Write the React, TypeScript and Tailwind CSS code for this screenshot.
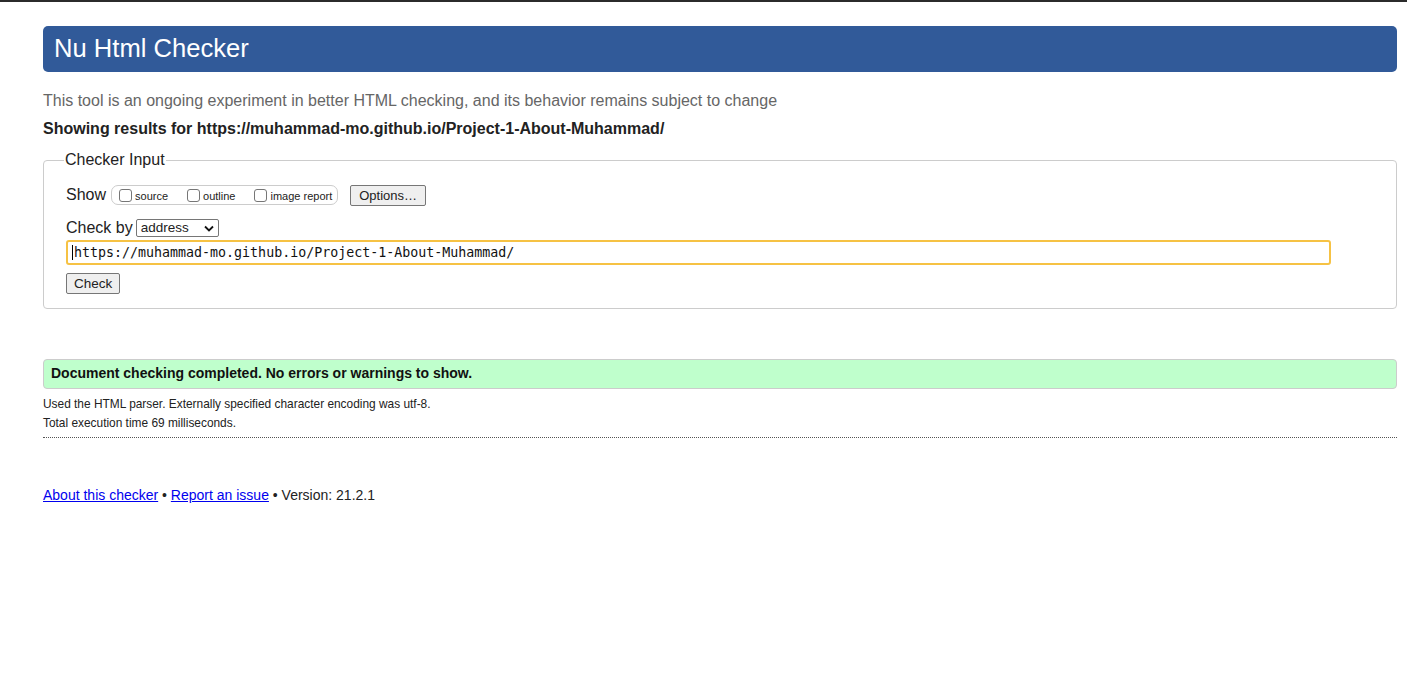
import React from "react";

const sans = "font-['Liberation_Sans',Arial,sans-serif]";

function ShowBox({ label }: { label: string }) {
  return (
    <label className="flex items-center gap-[3px] mr-[19px] last:mr-0">
      <input type="checkbox" className="w-[13px] h-[13px] m-0 appearance-none border border-[#767676] rounded-[3px] bg-white" />
      <span className="text-[11px] leading-none mt-[3px]">{label}</span>
    </label>
  );
}

export default function App() {
  return (
    <div className={`${sans} min-h-screen bg-white text-[#222] border-t-2 border-[#2b2b2b]`}>
      <div className="pl-[43px] pr-[10px] pt-[24px]">
        <h1 className="bg-[#315a99] text-white rounded-[5px] h-[46px] flex items-center pl-[11px] text-[25.6px] leading-none">
          Nu Html Checker
        </h1>
        <p className="text-[#666] text-[16px] mt-[19px] leading-[20px]">
          This tool is an ongoing experiment in better HTML checking, and its behavior remains subject to change
        </p>
        <p className="font-bold text-[16px] mt-[8px] leading-[20px] text-[#222]">
          Showing results for https://muhammad-mo.github.io/Project-1-About-Muhammad/
        </p>

        <fieldset className="border border-[#ccc] rounded-[4px] mt-[11px] pl-[22px] pr-[10px] pb-[13px] pt-[2px]">
          <legend className="text-[16px] px-[1px] -ml-[2px] leading-[20px]">Checker Input</legend>
          <div className="flex items-center mt-[12px] h-[22px]">
            <span className="text-[16px] mr-[5px]">Show</span>
            <div className="flex items-center border border-[#ccc] rounded-[7px] h-[20px] pl-[7px] pr-[5px]">
              <ShowBox label="source" />
              <ShowBox label="outline" />
              <ShowBox label="image report" />
            </div>
            <button className="ml-[12px] h-[21px] px-[8px] text-[13px] border border-[#767676] rounded-[2px] bg-[#efefef] leading-none">
              Options…
            </button>
          </div>
          <div className="flex items-center mt-[12px] h-[20px]">
            <span className="text-[16px] mr-[3px]">Check by</span>
            <div className="flex items-center justify-between w-[83px] h-[18px] border border-[#767676] rounded-[2px] px-[4px] text-[13.5px]">
              <span>address</span>
              <svg width="10" height="7" viewBox="0 0 10 7">
                <path d="M1 1.5 L5 5.5 L9 1.5" fill="none" stroke="#111" strokeWidth="1.8" />
              </svg>
            </div>
          </div>
          <div className="mt-[2px] w-[1265px] h-[25px] box-border border-2 border-[#f6c244] rounded-[3px] flex items-center pl-[4px] font-['DejaVu_Sans_Mono',monospace] text-[13.3px] text-[#111]">
            <span className="w-[1px] h-[15px] bg-black mr-[1px]" />
            https://muhammad-mo.github.io/Project-1-About-Muhammad/
          </div>
          <button className="mt-[8px] h-[21px] px-[7px] text-[13.5px] border border-[#767676] rounded-[2px] bg-[#efefef] leading-none">
            Check
          </button>
        </fieldset>

        <div className="mt-[50px] h-[30px] bg-[#bfffcc] border border-[#ccc] rounded-[4px] flex items-center pl-[7px] font-bold text-[14px] text-[#111]">
          Document checking completed. No errors or warnings to show.
        </div>
        <p className="text-[11.9px] mt-[7px] leading-[16px]">
          Used the HTML parser. Externally specified character encoding was utf-8.
        </p>
        <p className="text-[11.9px] mt-[3px] leading-[16px]">Total execution time 69 milliseconds.</p>
        <div className="mt-[6px] border-t border-dotted border-[#555]" />

        <p className="text-[14px] mt-[47px] text-[#222]">
          <a href="#" className="text-[#0000ee] underline">About this checker</a>
          {" • "}
          <a href="#" className="text-[#0000ee] underline">Report an issue</a>
          {" • Version: 21.2.1"}
        </p>
      </div>
    </div>
  );
}
